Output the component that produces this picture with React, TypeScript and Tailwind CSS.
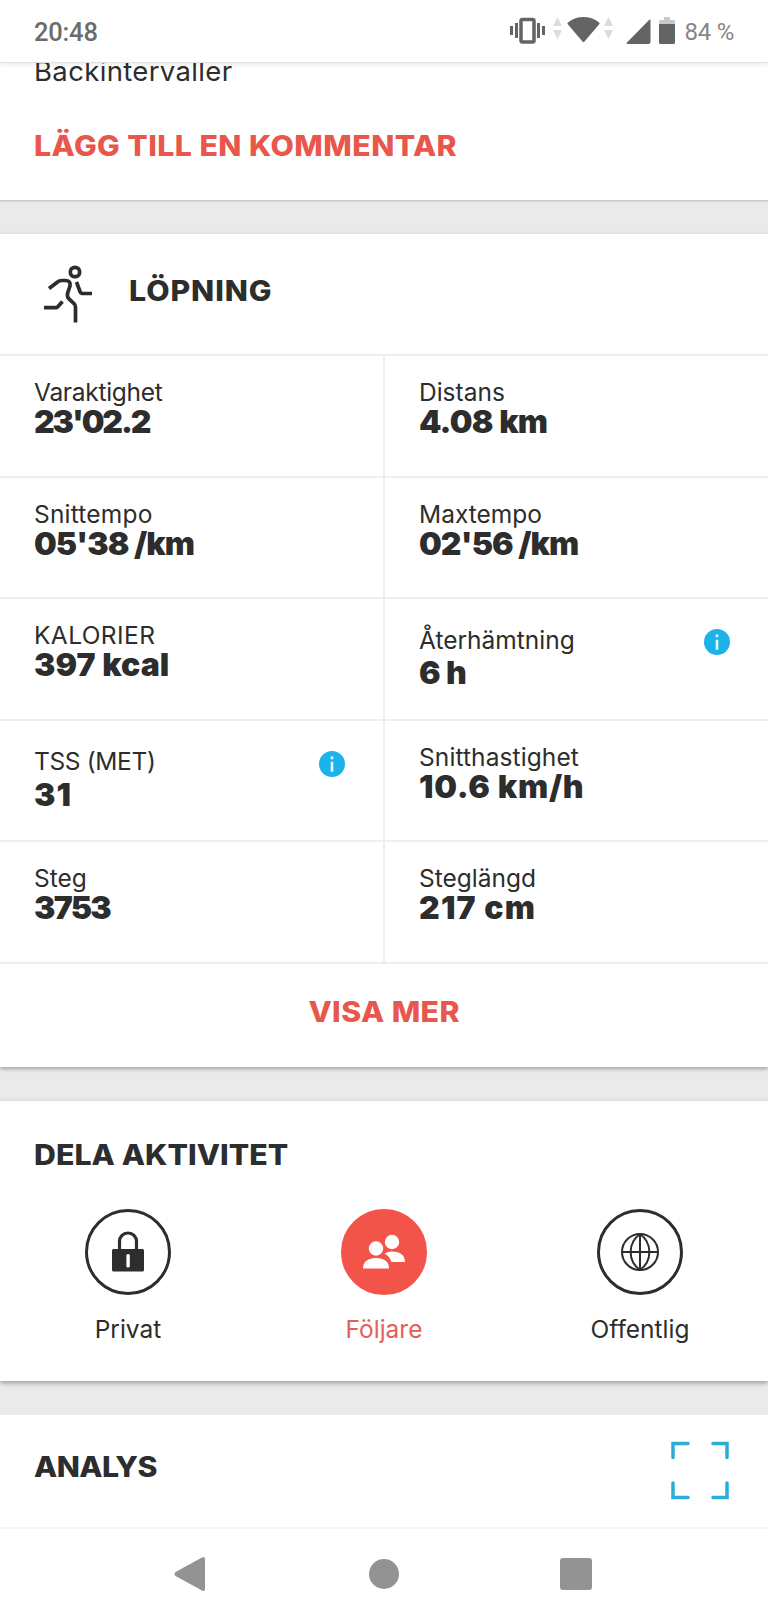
import React from 'react';
import clsx from 'clsx';

type Metric = {
  label: string;
  value: string;
  labelClass: string;
  valueClass: string;
  info?: boolean;
};

const metrics: Metric[] = [
  { label: 'Varaktighet', value: "23'02.2", labelClass: 'tracking-[-0.28px]', valueClass: 'tracking-[-2.1px]' },
  { label: 'Distans', value: '4.08 km', labelClass: 'tracking-[0px]', valueClass: 'tracking-[-0.8px] [word-spacing:1px]' },
  { label: 'Snittempo', value: "05'38 /km", labelClass: 'tracking-[0.2px]', valueClass: 'tracking-[-0.9px]' },
  { label: 'Maxtempo', value: "02'56 /km", labelClass: 'tracking-[0px]', valueClass: 'tracking-[-0.9px]' },
  { label: 'KALORIER', value: '397 kcal', labelClass: 'tracking-[0.4px]', valueClass: 'tracking-[0.1px]' },
  { label: 'Återhämtning', value: '6 h', labelClass: 'tracking-[0px]', valueClass: 'tracking-[-0.5px]', info: true },
  { label: 'TSS (MET)', value: '31', labelClass: 'tracking-[-0.35px]', valueClass: 'tracking-[1px]', info: true },
  { label: 'Snitthastighet', value: '10.6 km/h', labelClass: 'tracking-[0.1px]', valueClass: 'tracking-[0.75px]' },
  { label: 'Steg', value: '3753', labelClass: 'tracking-[0px]', valueClass: 'tracking-[-1.7px]' },
  { label: 'Steglängd', value: '217 cm', labelClass: 'tracking-[0px]', valueClass: 'tracking-[1.2px]' },
];

const DataArrows = () => (
  <svg width="9" height="28" viewBox="0 0 9 28" fill="#dcdcdc">
    <path d="M4.500 1 9 10H0zM0 14h9l-4.500 9z" />
  </svg>
);

const StatusBar = () => (
  <header className="relative z-10 flex h-[63px] shrink-0 items-start justify-between border-b border-[#e2e2e2] bg-white pl-[34px] pr-[34px] font-['Roboto',sans-serif] shadow-[0_2px_5px_rgba(0,0,0,0.08)]">
    <span className="pt-[17px] text-[25.5px] leading-[30px] font-medium tracking-[-0.2px] text-[#6c6c6c]">20:48</span>
    <div className="flex pt-4">
      <svg width="35" height="28" viewBox="0 0 35 28" fill="#646464">
        <path d="M0 10h3v9H0zM5 7h3v15H5zM27 7h3v15h-3zM32 10h3v9h-3z" />
        <rect x="11" y="3.500" width="13" height="22.500" rx="1.500" fill="none" stroke="#646464" strokeWidth="3.500" />
      </svg>
      <div className="ml-[8px]"><DataArrows /></div>
      <svg className="ml-[5px]" width="33" height="28" viewBox="0 0 33 28" fill="#646464">
        <path d="M1 6.500C10-.8 23-.8 32 6.500q1 .8.200 1.800L17.500 25.500q-1 1.300-2 0L.8 8.300Q0 7.300 1 6.500z" />
      </svg>
      <div className="ml-[4px]"><DataArrows /></div>
      <svg className="ml-[13px]" width="25" height="28" viewBox="0 0 25 28" fill="#646464">
        <path d="M24.500 4.500V26q0 2-2 2H1.500q-2 0-.5-1.500L23 4q1.500-1 1.500.5z" />
      </svg>
      <svg className="ml-[8px]" width="16" height="28" viewBox="0 0 16 28">
        <path d="M5 1h6v3h3.500Q16 4 16 5.500V8H0V5.500Q0 4 1.500 4H5z" fill="#c9c9c9" />
        <path d="M0 8h16v18.500Q16 28 14.500 28h-13Q0 28 0 26.500z" fill="#646464" />
      </svg>
      <span className="ml-[10px] w-[49.5px] pt-px text-[24px] leading-[30px] tracking-[-0.2px] whitespace-nowrap text-[#868686]">84 %</span>
    </div>
  </header>
);

const RunnerIcon = () => (
  <svg width="50" height="60" viewBox="0 0 50 60" fill="none" stroke="#2d2d2d" strokeWidth="3.700">
    <circle cx="32" cy="7" r="4.700" />
    <path d="M6 23.500 14.500 17Q16 15.500 19 15.500h4Q28 16 27 21l-2.500 7.500Q24 32 26 34l5 4.500Q32.500 40 32.500 42v15.500" />
    <path d="M33.500 17 37 26.500Q37.800 28.500 40 28.500h9M1 42.700h11.500Q14 42.700 15 41.500l4.500-5" />
  </svg>
);

const InfoIcon = () => (
  <svg width="26" height="26" viewBox="0 0 26 26">
    <circle cx="13" cy="13" r="13" fill="#1bb3ea" />
    <path d="M11.700 5.500h2.600v2.700h-2.600zM11.700 10.700h2.600v10h-2.600z" fill="#e8f8ff" />
  </svg>
);

const MetricCell = ({ metric, left }: { metric: Metric; left: boolean }) => (
  <div
    className={clsx(
      'flex items-start justify-between border-t-2 border-[#eeeeee] pr-[38px] pl-[34px]',
      left && 'border-r-2'
    )}
  >
    <div className={metric.info ? 'pt-[25.5px]' : 'pt-[23px]'}>
      <p className={clsx('text-[24.5px] whitespace-nowrap', metric.info ? 'mb-[1.5px] leading-[31px]' : 'leading-[27px]', metric.labelClass)}>
        {metric.label}
      </p>
      <p className={clsx('text-[32px] leading-[32px] font-black whitespace-nowrap', metric.valueClass)}>
        {metric.value}
      </p>
    </div>
    {metric.info && <div className="pt-[30px]"><InfoIcon /></div>}
  </div>
);

const LockIcon = () => (
  <svg width="32" height="42" viewBox="0 0 32 42">
    <path d="M7.500 19v-8.500a8.500 8.500 0 0 1 17 0V19" fill="none" stroke="#2d2d2d" strokeWidth="3.200" />
    <rect y="18" width="32" height="22.500" rx="1.500" fill="#2d2d2d" />
    <rect x="14.400" y="23" width="3.400" height="13.500" rx="1.500" fill="#fff" />
  </svg>
);

const PeopleIcon = () => (
  <svg width="42" height="38" viewBox="0 0 42 38" fill="#fff">
    <circle cx="29" cy="9" r="7.200" />
    <circle cx="13" cy="15.500" r="7.200" />
    <path d="M21.500 20.500Q24.500 18.500 29 18.500c8 0 13 3.500 13 10.500H28.500q-2-6-7-8.500z" />
    <path d="M0 35.500C0 28.500 5 25 13 25s13 3.500 13 10.500z" />
  </svg>
);

const GlobeIcon = () => (
  <svg width="40" height="40" viewBox="0 0 40 40" fill="none" stroke="#2d2d2d" strokeWidth="2">
    <circle cx="20" cy="20" r="18" />
    <path d="M20 2v36M2 20h36M20 2C7.500 11 7.500 29 20 38M20 2c12.500 9 12.500 27 0 36" />
  </svg>
);

const shareOptions = [
  { label: 'Privat', icon: <LockIcon />, active: false },
  { label: 'Följare', icon: <PeopleIcon />, active: true },
  { label: 'Offentlig', icon: <GlobeIcon />, active: false },
];

const App = () => {
  return (
    <div className="flex h-[1621px] w-[768px] flex-col overflow-hidden bg-[#eaeaea] font-['Inter',sans-serif] text-[#2d2d2d]">
      <StatusBar />

      {/* Kommentarer */}
      <section className="h-[137px] shrink-0 bg-white pl-[34px] shadow-[0_1px_2px_rgba(0,0,0,0.2)]">
        <p className="-mt-[9px] text-[27.5px] leading-[34px] tracking-[0.35px]">Backintervaller</p>
        <button className="mt-[41px] block origin-left scale-x-[1.08] text-[28px] leading-[34px] font-extrabold tracking-[0.41px] whitespace-nowrap text-[#e9574c]">
          LÄGG TILL EN KOMMENTAR
        </button>
      </section>

      {/* Sammanfattning */}
      <section className="mt-[34px] flex h-[833px] shrink-0 flex-col bg-white shadow-[0_2px_4px_rgba(0,0,0,0.3)]">
        <div className="flex h-[120px] shrink-0 items-start pt-[31px] pl-[43px]">
          <RunnerIcon />
          <h2 className="ml-[35.5px] origin-left scale-x-[1.08] pt-[9px] text-[28px] leading-[34px] font-extrabold tracking-[0.85px]">LÖPNING</h2>
        </div>
        <div className="grid h-[608px] shrink-0 grid-cols-[385px_383px] grid-rows-5">
          {metrics.map((metric, i) => (
            <MetricCell key={metric.label} metric={metric} left={i % 2 === 0} />
          ))}
        </div>
        <button className="flex flex-1 items-center justify-center border-t-2 border-[#eeeeee] pb-[7px] text-[28px] font-extrabold tracking-[0.4px] text-[#e9574c]">
          <span className="scale-x-[1.08]">VISA MER</span>
        </button>
      </section>

      {/* Delning */}
      <section className="mt-[34px] h-[280px] shrink-0 bg-white pt-[37px] shadow-[0_2px_5px_rgba(0,0,0,0.35)]">
        <h2 className="ml-[34px] origin-left scale-x-[1.08] text-[28px] leading-[34px] font-extrabold tracking-[0.07px]">DELA AKTIVITET</h2>
        <div className="mt-[37px] grid grid-cols-3">
          {shareOptions.map((option) => (
            <div key={option.label} className="flex flex-col items-center">
              <div
                className={clsx(
                  'flex size-[86px] items-center justify-center rounded-full border-[3px]',
                  option.active ? 'border-[#f2544a] bg-[#f2544a]' : 'border-[#2d2d2d]'
                )}
              >
                {option.icon}
              </div>
              <span className={clsx('mt-[19px] text-[24.5px] leading-[30px]', option.active && 'text-[#e4605a]')}>
                {option.label}
              </span>
            </div>
          ))}
        </div>
      </section>

      {/* Analys */}
      <section className="mt-[34px] flex h-[112px] shrink-0 items-start justify-between bg-white pr-[38px] pl-[34px]">
        <h2 className="origin-left scale-x-[1.08] pt-[35px] text-[28px] leading-[34px] font-extrabold tracking-[-0.5px]">ANALYS</h2>
        <svg className="mt-[25px]" width="60" height="60" viewBox="0 0 60 60" fill="none" stroke="#2badd8" strokeWidth="3.500" strokeLinecap="round">
          <path d="M18 3.500H3v14M43 3.500h14v14M3 43v14.500h15M57 43v14.500H43" />
        </svg>
      </section>

      <nav className="flex h-[94px] shrink-0 items-center border-t-2 border-[#f6f6f6] bg-white pb-[2px] pl-[174px]">
        <svg width="32" height="36" viewBox="0 0 32 36" fill="#939393">
          <path d="M1.500 16 28 1.500Q31 0 31 3v30q0 3-3 1.500L1.500 20Q-.5 18 1.500 16z" />
        </svg>
        <div className="ml-[163px] size-[30px] rounded-full bg-[#939393]" />
        <div className="ml-[161px] size-[32px] rounded-[3px] bg-[#939393]" />
      </nav>
    </div>
  );
};

export default App;
